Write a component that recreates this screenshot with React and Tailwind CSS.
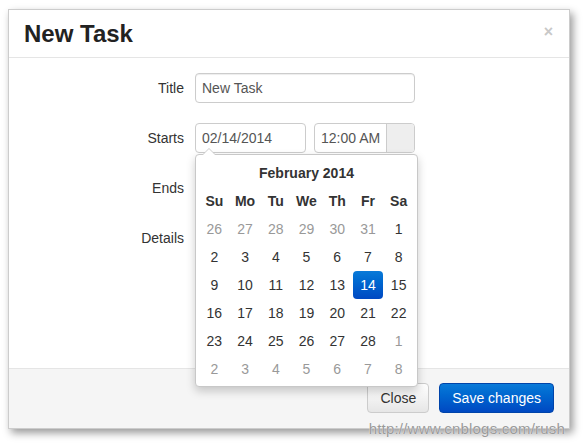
import React from 'react';

const weeks = [
  [[26, 1], [27, 1], [28, 1], [29, 1], [30, 1], [31, 1], [1, 0]],
  [[2, 0], [3, 0], [4, 0], [5, 0], [6, 0], [7, 0], [8, 0]],
  [[9, 0], [10, 0], [11, 0], [12, 0], [13, 0], [14, 2], [15, 0]],
  [[16, 0], [17, 0], [18, 0], [19, 0], [20, 0], [21, 0], [22, 0]],
  [[23, 0], [24, 0], [25, 0], [26, 0], [27, 0], [28, 0], [1, 1]],
  [[2, 1], [3, 1], [4, 1], [5, 1], [6, 1], [7, 1], [8, 1]],
];

function DatePicker() {
  return (
    <div className="absolute left-[186px] top-[96px] w-[223px] h-[233px] bg-white border border-[#c8c8c8] rounded-[4px] shadow-[0_4px_10px_rgba(0,0,0,0.2)] py-[4px] px-[3px] text-[14px] text-[#333] z-10">
      {/* caret */}
      <div className="absolute -top-[7px] left-[6px] w-0 h-0 border-l-[7px] border-r-[7px] border-b-[7px] border-l-transparent border-r-transparent border-b-[#ccc]" />
      <div className="absolute -top-[6px] left-[7px] w-0 h-0 border-l-[6px] border-r-[6px] border-b-[6px] border-l-transparent border-r-transparent border-b-white" />
      <div className="h-[28px] flex items-center justify-center font-bold">February 2014</div>
      <div className="grid grid-cols-7 h-[28px] items-center text-center font-bold">
        {['Su', 'Mo', 'Tu', 'We', 'Th', 'Fr', 'Sa'].map((d) => (
          <div key={d}>{d}</div>
        ))}
      </div>
      {weeks.map((w, i) => (
        <div key={i} className="grid grid-cols-7 h-[28px]">
          {w.map(([n, t], j) => (
            <div key={j} className="flex items-center justify-center">
              {t === 2 ? (
                <span className="w-[30px] h-[28px] flex items-center justify-center rounded-[4px] text-white bg-gradient-to-b from-[#0a7ad8] to-[#0048c2]">
                  {n}
                </span>
              ) : (
                <span className={t === 1 ? 'text-[#999]' : ''}>{n}</span>
              )}
            </div>
          ))}
        </div>
      ))}
    </div>
  );
}

export default function App() {
  return (
    <div className="w-[584px] h-[443px] bg-white overflow-hidden pt-[9px] pl-[8px] font-['Liberation_Sans',Arial,sans-serif]">
      <div className="relative w-[562px] h-[420px] bg-white border border-[rgba(0,0,0,0.2)] shadow-[3px_4px_8px_rgba(0,0,0,0.4)] flex flex-col">
        {/* Header */}
        <div className="h-[48px] border-b border-[#e5e5e5] flex items-center justify-between pl-[15px] pr-[16px]">
          <h3 className="text-[24px] font-bold text-[#222]">New Task</h3>
          <span className="text-[#c8c8c8] text-[16px] font-bold leading-none -mt-[4px]">×</span>
        </div>

        {/* Body */}
        <div className="relative h-[310px] pt-[15px] text-[14px] text-[#333]">
          <div className="grid grid-cols-[175px_220px] gap-x-[11px] gap-y-[20px] items-start">
            <label className="h-[30px] flex items-center justify-end">Title</label>
            <div className="h-[30px] border border-[#ccc] rounded-[4px] flex items-center px-[6px] text-[#555] shadow-[inset_0_1px_1px_rgba(0,0,0,0.075)]">
              New Task
            </div>

            <label className="h-[30px] flex items-center justify-end">Starts</label>
            <div className="h-[30px] flex gap-[8px]">
              <div className="w-[111px] border border-[#ccc] rounded-[4px] flex items-center px-[6px] text-[#555]">02/14/2014</div>
              <div className="w-[101px] border border-[#ccc] rounded-[4px] flex overflow-hidden text-[#555]">
                <div className="flex-1 min-w-0 flex items-center pl-[6px] whitespace-nowrap overflow-hidden">12:00 AM</div>
                <div className="w-[28px] shrink-0 bg-[#eee] border-l border-[#ccc]" />
              </div>
            </div>

            <label className="h-[30px] flex items-center justify-end">Ends</label>
            <div className="h-[30px] flex gap-[8px]">
              <div className="w-[111px] border border-[#ccc] rounded-[4px]" />
              <div className="w-[101px] border border-[#ccc] rounded-[4px]" />
            </div>

            <label className="h-[30px] flex items-center justify-end">Details</label>
            <div className="h-[100px] border border-[#ccc] rounded-[4px]" />
          </div>
          <DatePicker />
        </div>

        {/* Footer */}
        <div className="flex-1 bg-[#f5f5f5] border-t border-[#e5e5e5] flex justify-end items-start gap-[10px] pt-[14px] pr-[15px] text-[14px]">
          <button className="h-[30px] px-[12px] rounded-[4px] border border-[#ccc] text-[#333] bg-gradient-to-b from-white to-[#e6e6e6]">
            Close
          </button>
          <button className="h-[30px] px-[12px] rounded-[4px] border border-[#0044aa] text-white bg-gradient-to-b from-[#0a7ad8] to-[#0048c2]">
            Save changes
          </button>
        </div>

        <div className="absolute right-[4px] -bottom-[12px] text-[15px] text-[#9a9a9a] tracking-[0.2px] [text-shadow:0_0_1px_#fff]">
          http://www.cnblogs.com/rush
        </div>
      </div>
    </div>
  );
}
